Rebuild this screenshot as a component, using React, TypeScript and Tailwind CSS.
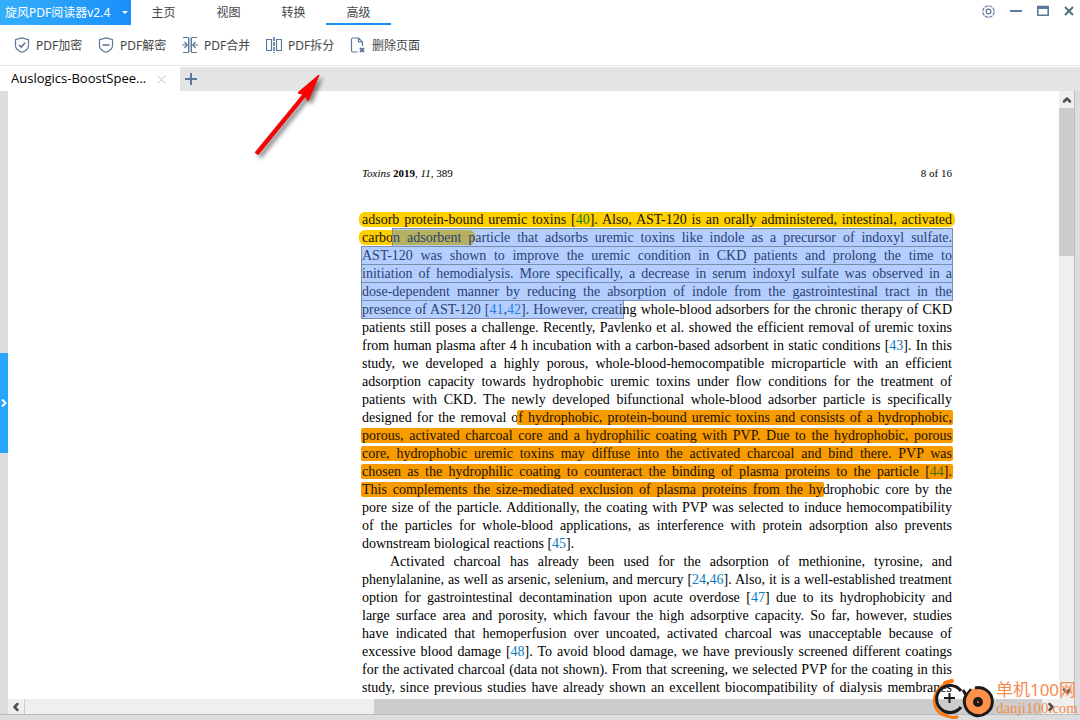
import { useState, type ReactNode } from "react";
import { ChevronDown, ChevronLeft, ChevronRight, ChevronUp } from "lucide-react";

const MENUS = ["主页", "视图", "转换", "高级"];

const TOOLS: { label: string; icon: ReactNode }[] = [
  {
    label: "PDF加密",
    icon: (
      <>
        <path d="M8 .8 L14.5 2.6 V8.5 C14.5 11.6 11.5 14 8 15.2 C4.5 14 1.5 11.6 1.5 8.5 V2.6 Z" strokeWidth="1.2" />
        <path d="M5 7.8 L7.3 10 L11.2 5.8" strokeWidth="1.6" />
      </>
    ),
  },
  {
    label: "PDF解密",
    icon: (
      <>
        <path d="M8 .8 L14.5 2.6 V8.5 C14.5 11.6 11.5 14 8 15.2 C4.5 14 1.5 11.6 1.5 8.5 V2.6 Z" strokeWidth="1.2" />
        <path d="M4.5 8 H11.5" strokeWidth="1.6" />
      </>
    ),
  },
  {
    label: "PDF合并",
    icon: (
      <>
        <path d="M8 1 V15" stroke="#b9c6d5" strokeWidth="3" />
        <path d="M1 .5 H6.5 V15.5 H1 M15 .5 H9.5 V15.5 H15" />
        <path d="M0 8 H5 M2.5 5 L5.3 8 L2.5 11 M16 8 H11 M13.5 5 L10.7 8 L13.5 11" strokeWidth="1.2" />
      </>
    ),
  },
  {
    label: "PDF拆分",
    icon: (
      <>
        <path d="M.5 2.5 H5.5 V13.5 H.5 Z M10.5 2.5 H15.5 V13.5 H10.5 Z" strokeWidth="1.2" />
        <path d="M8 0 V16" strokeDasharray="4 1" strokeWidth="1.6" />
      </>
    ),
  },
  {
    label: "删除页面",
    icon: (
      <>
        <path d="M7.5 15 H3 Q1.5 15 1.5 13.5 V2.5 Q1.5 1 3 1 H8.5 L12.5 5 V9 M8.5 1 V5 H12.5" strokeWidth="1.2" />
        <path d="M10 11 L14 15 M14 11 L10 15" strokeWidth="1.9" />
      </>
    ),
  },
];

function Cite({ children }: { children: string }) {
  return <a href="#references" className="text-[#0b7bbd]">{children}</a>;
}

function Yellow({ children }: { children: ReactNode }) {
  return <mark className="-mx-[3px] rounded-md bg-[#ffd000] px-[3px] text-[#1a1500]">{children}</mark>;
}

function Orange({ children }: { children: ReactNode }) {
  return <mark className="-mx-px rounded-xs bg-[#f89b00] px-px text-[#1c1200]">{children}</mark>;
}

function Selected({ children }: { children: ReactNode }) {
  return (
    <span className="-mx-px border border-[#7c8cab] bg-[#b4ceff] py-px text-[#2b426f]">{children}</span>
  );
}

const FIRST: ReactNode[] = [
  <Yellow>adsorb protein-bound uremic toxins [<a href="#references" className="text-[#1f7a10]">40</a>]. Also, AST-120 is an orally administered, intestinal, activated</Yellow>,
  <><Yellow>carbo</Yellow><Selected><mark className="rounded-r-md bg-[#b5b160] text-[#2b426f]">n adsorbent p</mark>article that adsorbs uremic toxins like indole as a precursor of indoxyl sulfate.</Selected></>,
  <Selected>AST-120 was shown to improve the uremic condition in CKD patients and prolong the time to</Selected>,
  <Selected>initiation of hemodialysis. More specifically, a decrease in serum indoxyl sulfate was observed in a</Selected>,
  <Selected>dose-dependent manner by reducing the absorption of indole from the gastrointestinal tract in the</Selected>,
  <><Selected>presence of AST-120 [<a href="#references" className="text-[#2382e0]">41</a>,<a href="#references" className="text-[#2382e0]">42</a>]. However, creati</Selected>ng whole-blood adsorbers for the chronic therapy of CKD</>,
  "patients still poses a challenge. Recently, Pavlenko et al. showed the efficient removal of uremic toxins",
  <>from human plasma after 4 h incubation with a carbon-based adsorbent in static conditions [<Cite>43</Cite>]. In this</>,
  "study, we developed a highly porous, whole-blood-hemocompatible microparticle with an efficient",
  "adsorption capacity towards hydrophobic uremic toxins under flow conditions for the treatment of",
  "patients with CKD. The newly developed bifunctional whole-blood adsorber particle is specifically",
  <>designed for the removal o<Orange>f hydrophobic, protein-bound uremic toxins and consists of a hydrophobic,</Orange></>,
  <Orange>porous, activated charcoal core and a hydrophilic coating with PVP. Due to the hydrophobic, porous</Orange>,
  <Orange>core, hydrophobic uremic toxins may diffuse into the activated charcoal and bind there. PVP was</Orange>,
  <Orange>chosen as the hydrophilic coating to counteract the binding of plasma proteins to the particle [<a href="#references" className="text-[#4c6b10]">44</a>].</Orange>,
  <><Orange>This complements the size-mediated exclusion of plasma proteins from the hy</Orange>drophobic core by the</>,
  "pore size of the particle. Additionally, the coating with PVP was selected to induce hemocompatibility",
  "of the particles for whole-blood applications, as interference with protein adsorption also prevents",
  <>downstream biological reactions [<Cite>45</Cite>].</>,
];

const SECOND: ReactNode[] = [
  "Activated charcoal has already been used for the adsorption of methionine, tyrosine, and",
  <>phenylalanine, as well as arsenic, selenium, and mercury [<Cite>24</Cite>,<Cite>46</Cite>]. Also, it is a well-established treatment</>,
  <>option for gastrointestinal decontamination upon acute overdose [<Cite>47</Cite>] due to its hydrophobicity and</>,
  "large surface area and porosity, which favour the high adsorptive capacity. So far, however, studies",
  "have indicated that hemoperfusion over uncoated, activated charcoal was unacceptable because of",
  <>excessive blood damage [<Cite>48</Cite>]. To avoid blood damage, we have previously screened different coatings</>,
  "for the activated charcoal (data not shown). From that screening, we selected PVP for the coating in this",
  "study, since previous studies have already shown an excellent biocompatibility of dialysis membranes",
];

function Watermark() {
  return (
    <div className="pointer-events-none absolute right-[2px] bottom-0 flex items-center text-[#f58b4c]">
      <svg width="64" height="44" viewBox="0 0 64 44" fill="none" aria-hidden="true">
        <path d="M20 5 C14 5 12 9 7 13 C-1 22 2 36 12 39 C17 40 20 43 25 41" stroke="#ff7a0f" strokeWidth="3" strokeLinecap="round" />
        <path d="M13 7 L20 5" stroke="#ff7a0f" strokeWidth="4" strokeLinecap="round" />
        <path d="M29 15 A13.5 13.5 0 1 0 29 31" stroke="#1d1a1c" strokeWidth="3" />
        <path d="M12 22 H23 M17.5 17 V27" stroke="#1d1a1c" strokeWidth="2" />
        <circle cx="46" cy="26" r="14" fill="#ff9248" />
        <path d="M43 12 A14 14 0 1 1 34 19 L31 14" stroke="#1d1a1c" strokeWidth="3" />
        <path d="M34 19 L39 13" stroke="#1d1a1c" strokeWidth="2" />
        <circle cx="46" cy="26" r="5" fill="#1d1a1c" />
        <circle cx="46" cy="26" r="1" fill="#ff7a0f" />
      </svg>
      <div className="flex flex-col">
        <span className="text-[17px] leading-5">单机100网</span>
        <span className="font-['Liberation_Serif',serif] text-[15px] leading-4">danji100.com</span>
      </div>
    </div>
  );
}

export default function App() {
  const [menu, setMenu] = useState("高级");

  return (
    <div className="relative flex h-screen flex-col overflow-hidden bg-white font-['Noto_Sans','Noto_Sans_CJK_SC',sans-serif] text-xs text-[#444]">
      <header className="flex h-[25px] shrink-0 items-stretch">
        <button className="flex w-[131px] items-center justify-between bg-linear-to-r from-[#35aefa] to-[#1890fa] pr-[3px] pl-[5px] whitespace-nowrap text-white">
          旋风PDF阅读器v2.4
          <svg width="6" height="3" viewBox="0 0 6 3" fill="currentColor" aria-hidden="true">
            <path d="M0 0 H6 L3 3 Z" />
          </svg>
        </button>
        <nav className="flex">
          {MENUS.map((m) => (
            <button
              key={m}
              onClick={() => setMenu(m)}
              className={`w-[65px] border-b-2 pt-[2px] ${menu === m ? "border-[#1890fa]" : "border-transparent"}`}>
              {m}
            </button>
          ))}
        </nav>
        <div className="ml-auto flex items-center gap-[15px] pr-[6px] pb-[3px] text-[#5b7898]">
          <button aria-label="Settings">
            <svg width="13" height="13" viewBox="0 0 13 13" fill="none" stroke="currentColor">
              <circle cx="6.5" cy="6.5" r="5.7" strokeWidth="1.1" strokeDasharray="3.6 .8" />
              <circle cx="6.5" cy="6.5" r="2.4" strokeWidth="1.2" />
            </svg>
          </button>
          <button aria-label="Minimize">
            <svg width="12" height="12" viewBox="0 0 12 12"><path d="M0 5 H12 V7 H0 Z" fill="currentColor" /></svg>
          </button>
          <button aria-label="Maximize">
            <svg width="12" height="12" viewBox="0 0 12 12" fill="none" stroke="currentColor">
              <path d="M.8 1.5 H11.2 V10.2 H.8 Z" strokeWidth="1.6" />
              <path d="M0 2.5 H12" strokeWidth="3" />
            </svg>
          </button>
          <button aria-label="Close">
            <svg width="10" height="10" viewBox="0 0 10 10" fill="none" stroke="#4d706e" strokeWidth="2">
              <path d="M1 1 L9 9 M9 1 L1 9" />
            </svg>
          </button>
        </div>
      </header>

      <div className="flex h-[41px] shrink-0 items-center border-b border-[#e9e9e9] pl-[14px]">
        {TOOLS.map((t) => (
          <button key={t.label} className="flex min-w-[84px] items-center gap-[6px] whitespace-nowrap">
            <svg width="16" height="16" viewBox="0 0 16 16" fill="none" stroke="#5b7898" aria-hidden="true">
              {t.icon}
            </svg>
            <span className="pt-px">{t.label}</span>
          </button>
        ))}
      </div>

      {/* Open documents */}
      <div className="mt-px flex h-6 shrink-0 items-stretch bg-[#e4e4e4]">
        <div className="flex w-[180px] items-center justify-between bg-white pr-[14px] pl-[11px]">
          <span className="font-['Open_Sans',sans-serif] text-[13px] whitespace-nowrap text-black">Auslogics-BoostSpee...</span>
          <button aria-label="Close tab">
            <svg width="9" height="9" viewBox="0 0 9 9" stroke="#c4c4c4"><path d="M.5 .5 L8.5 8.5 M8.5 .5 L.5 8.5" /></svg>
          </button>
        </div>
        <button aria-label="New tab" className="pl-[5px]">
          <svg width="12" height="12" viewBox="0 0 12 12" fill="#5b7898"><path d="M5 0 H7 V5 H12 V7 H7 V12 H5 V7 H0 V5 H5 Z" /></svg>
        </button>
      </div>

      <div className="flex min-h-0 flex-1 bg-[#dddde0]">
        <aside className="flex w-2 shrink-0 items-center">
          <button aria-label="Show sidebar" className="flex h-[100px] w-2 items-center justify-center bg-[#29a5fc] text-white">
            <svg width="6" height="8" viewBox="0 0 6 8" fill="none" stroke="currentColor" strokeWidth="2">
              <path d="M1 .5 L4.5 4 L1 7.5" />
            </svg>
          </button>
        </aside>
        <main className="flex min-w-0 flex-1 flex-col bg-[#efefef]">
          <div className="flex min-h-0 flex-1">
            <article className="min-w-0 flex-1 overflow-hidden bg-white pt-[73px] pr-[107px] pl-[354px] font-['Liberation_Serif',serif] text-[14px] leading-[18px] text-black">
              <div className="mb-[29px] flex justify-between text-[11px]">
                <span><i>Toxins</i> <b>2019</b>, <i>11</i>, 389</span>
                <span>8 of 16</span>
              </div>
              {[FIRST, SECOND].map((lines, p) => (
                <div key={p}>
                  {lines.map((line, i) => (
                    <p
                      key={i}
                      className={`whitespace-nowrap ${p === 0 && i === lines.length - 1 ? "" : "[text-align-last:justify]"} ${p === 1 && i === 0 ? "pl-7" : ""}`}>
                      {line}
                    </p>
                  ))}
                </div>
              ))}
            </article>
            <div className="flex w-[15px] shrink-0 flex-col text-[#505050]">
              <button aria-label="Scroll up" className="flex h-[17px] items-center justify-center">
                <ChevronUp size={12} strokeWidth={5} />
              </button>
              <div className="h-[148px] bg-[#cdcdcd]" />
              <button aria-label="Scroll down" className="mt-auto flex h-[17px] items-center justify-center">
                <ChevronDown size={12} strokeWidth={5} />
              </button>
            </div>
          </div>
          <div className="mr-[15px] flex h-[15px] shrink-0 text-[#505050]">
            <button aria-label="Scroll left" className="flex w-[17px] items-center justify-center border-r border-[#cdcdcd]">
              <ChevronLeft size={12} strokeWidth={5} />
            </button>
            <div className="ml-[349px] flex-1 bg-[#cdcdcd]" />
            <button aria-label="Scroll right" className="flex w-[17px] items-center justify-center">
              <ChevronRight size={12} strokeWidth={5} />
            </button>
          </div>
        </main>
        <div className="w-[6px] shrink-0 border-l border-[#bcbcbe]" />
      </div>
      <footer className="h-[6px] shrink-0 border-t border-[#bcbcbe] bg-[#dddde0]" />

      {/* Pointer to the split tool */}
      <svg className="pointer-events-none absolute top-[69px] left-[250px] drop-shadow-[3px_3px_2px_rgba(0,0,0,0.5)]" width="80" height="95" viewBox="0 0 80 95" aria-hidden="true">
        <path d="M69 6 L58 31 L56 27 L8 86 L5 83.5 L53 25 L48 23.5 Z" fill="#ff0000" stroke="#c01010" strokeWidth=".7" />
        <path d="M69 6 L58 32 L55.5 27 L53 25 L48 24 Z" fill="#ff0000" stroke="#ff0000" strokeWidth="1" />
      </svg>
      <Watermark />
    </div>
  );
}
